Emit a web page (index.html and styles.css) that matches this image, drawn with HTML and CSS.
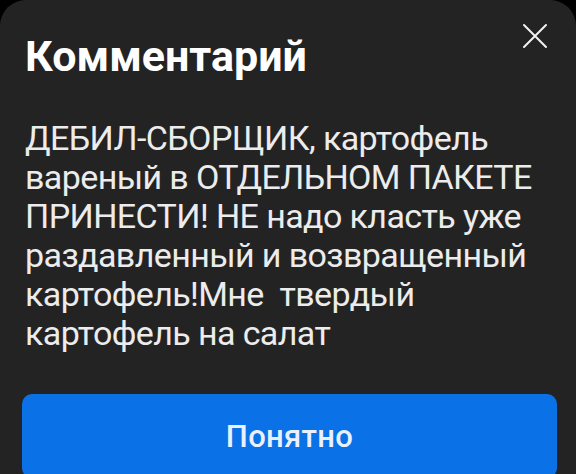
FILE: index.html
```html
<!DOCTYPE html>
<html lang="ru">
<head>
  <meta charset="UTF-8">
  <meta name="viewport" content="width=device-width, initial-scale=1.0">
  <title>Комментарий</title>
  <link rel="stylesheet" href="styles.css">
</head>
<body>
  <!-- Comment dialog -->
  <div class="sheet">
    <div class="sheet-head">
      <h2 class="sheet-title">Комментарий</h2>
      <button class="btn-close" type="button" aria-label="Закрыть">
        <svg width="26" height="26" viewBox="0 0 26 26">
          <path d="M2 2 L24 24 M24 2 L2 24" stroke="#f2f2f2" stroke-width="2" stroke-linecap="round"/>
        </svg>
      </button>
    </div>

    <p class="sheet-text">ДЕБИЛ-СБОРЩИК, картофель<br>вареный в ОТДЕЛЬНОМ ПАКЕТЕ<br>ПРИНЕСТИ! НЕ надо класть уже<br>раздавленный и возвращенный<br>картофель!Мне&nbsp; твердый<br>картофель на салат</p>

    <button class="btn-ok" type="button">Понятно</button>
  </div>
</body>
</html>
```

FILE: styles.css
```css
html,
body {
  margin: 0;
  height: 100%;
  background-color: #000;
}

body {
  font-family: Roboto, "Noto Sans", sans-serif;
  overflow: hidden;
}

.sheet {
  background-color: #232324;
  border-radius: 26px 26px 0 0;
  min-height: 100%;
  padding: 0 22px 0 25px;
  box-sizing: border-box;
}

.sheet-head {
  display: flex;
  justify-content: space-between;
  align-items: flex-start;
  padding-top: 30px;
}

.sheet-title {
  margin: 0;
  color: #fff;
  font-size: 43px;
  font-weight: 700;
  line-height: 52px;
}

.btn-close {
  background: none;
  border: 0;
  padding: 0;
  margin: -7px 6px 0 0;
  cursor: pointer;
}

.sheet-text {
  margin: 37px -20px 0 0;
  color: #ececec;
  font-size: 34px;
  letter-spacing: -0.6px;
  line-height: 39px;
  white-space: nowrap;
}

.btn-ok {
  display: block;
  margin: 41px -3px 0 -3px;
  width: calc(100% + 6px);
  height: 84px;
  border: 0;
  border-radius: 10px;
  background-color: #0a72e6;
  color: #e9f1fd;
  font-family: inherit;
  font-size: 31px;
  font-weight: 500;
  letter-spacing: 0.3px;
  cursor: pointer;
}
```
